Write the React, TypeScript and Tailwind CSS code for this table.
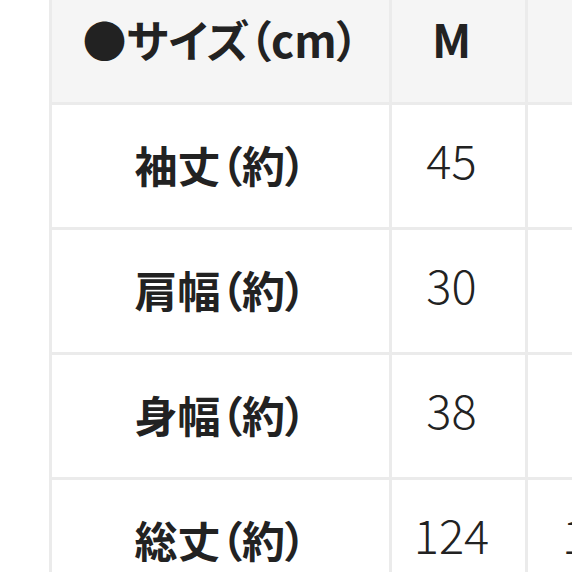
const rows = [
  { label: '袖丈（約）', m: '45', l: '' },
  { label: '肩幅（約）', m: '30', l: '' },
  { label: '身幅（約）', m: '38', l: '' },
  { label: '総丈（約）', m: '124', l: '126' },
];

const jp = "font-['Noto_Sans_CJK_JP','Noto_Sans',sans-serif] [font-feature-settings:'palt']";

export default function App() {
  return (
    <div className={`h-[572px] w-[572px] overflow-hidden bg-white text-[#222] ${jp}`}>
      <div className="-mt-[23px] ml-[49px] grid w-max grid-cols-[337px_133px_160px] auto-rows-[122px] gap-[3px] border-[3px] border-[#ebebeb] bg-[#ebebeb]">
        <div className="flex items-center justify-center bg-[#f5f5f5] pb-[4px] text-[44px] font-bold">
          ●サイズ（cm）
        </div>
        <div className="flex items-center justify-center bg-[#f5f5f5] pr-[14px] pb-[6px] text-[46px] font-bold">M</div>
        <div className="bg-[#f5f5f5]" />

        {rows.map((row) => (
          <div key={row.label} className="contents">
            <div className="flex items-center justify-center bg-white pb-[4px] text-[43px] font-bold">{row.label}</div>
            <div className="flex items-center justify-center bg-white pr-[14px] pb-[14px] text-[47px] font-light">{row.m}</div>
            <div className="flex items-center bg-white pb-[14px] pl-[34px] text-[47px] font-light">{row.l}</div>
          </div>
        ))}
      </div>
    </div>
  );
}
